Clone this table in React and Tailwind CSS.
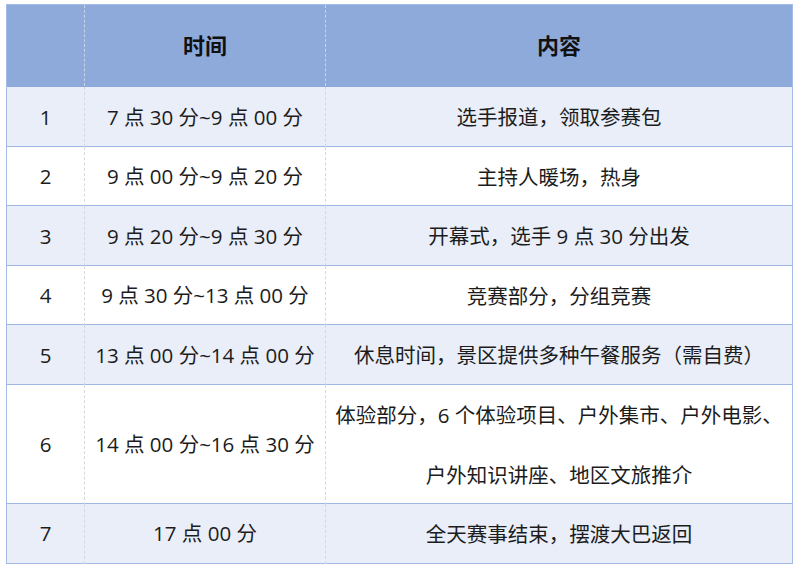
import React from "react";

const rows = [
  ["1", "7 点 30 分~9 点 00 分", ["选手报道，领取参赛包"], true],
  ["2", "9 点 00 分~9 点 20 分", ["主持人暖场，热身"], false],
  ["3", "9 点 20 分~9 点 30 分", ["开幕式，选手 9 点 30 分出发"], true],
  ["4", "9 点 30 分~13 点 00 分", ["竞赛部分，分组竞赛"], false],
  ["5", "13 点 00 分~14 点 00 分", ["休息时间，景区提供多种午餐服务（需自费）"], true],
  ["6", "14 点 00 分~16 点 30 分", ["体验部分，6 个体验项目、户外集市、户外电影、", "户外知识讲座、地区文旅推介"], false],
  ["7", "17 点 00 分", ["全天赛事结束，摆渡大巴返回"], true],
];

export default function App() {
  return (
    <div
      className="w-[800px] h-[567px] bg-white pt-[4px] pl-[6px]"
      style={{ fontFamily: '"Open Sans", "Noto Sans CJK SC", sans-serif' }}
    >
      <div className="w-[787px] border border-[#a3bbe6] text-[20.5px] text-[#1c1c1c]">
        <div className="grid grid-cols-[78px_241px_1fr] h-[82px] bg-[#8eaadb] border-b border-[#8eaadb] font-bold text-[22px] text-[#111]">
          <div className="border-r border-dashed border-[#c9d3e6]"></div>
          <div className="flex items-center justify-center border-r border-dashed border-[#c9d3e6]">时间</div>
          <div className="flex items-center justify-center">内容</div>
        </div>
        {rows.map(([n, t, c, shaded], i) => (
          <div
            key={n}
            className={
              "grid grid-cols-[78px_241px_1fr] " +
              (n === "6" ? "h-[119px] " : "h-[59.5px] ") +
              (i < rows.length - 1 ? "border-b border-[#9db6e4] " : "") +
              (shaded ? "bg-[#e9eef8]" : "bg-white")
            }
          >
            <div className="flex items-center justify-center border-r border-dashed border-[#d3d7de]">{n}</div>
            <div className="flex items-center justify-center border-r border-dashed border-[#d3d7de] whitespace-nowrap">{t}</div>
            <div className="flex flex-col items-center justify-center text-center leading-[60px] whitespace-nowrap">
              {c.map((line) => (
                <div key={line}>{line}</div>
              ))}
            </div>
          </div>
        ))}
      </div>
    </div>
  );
}
